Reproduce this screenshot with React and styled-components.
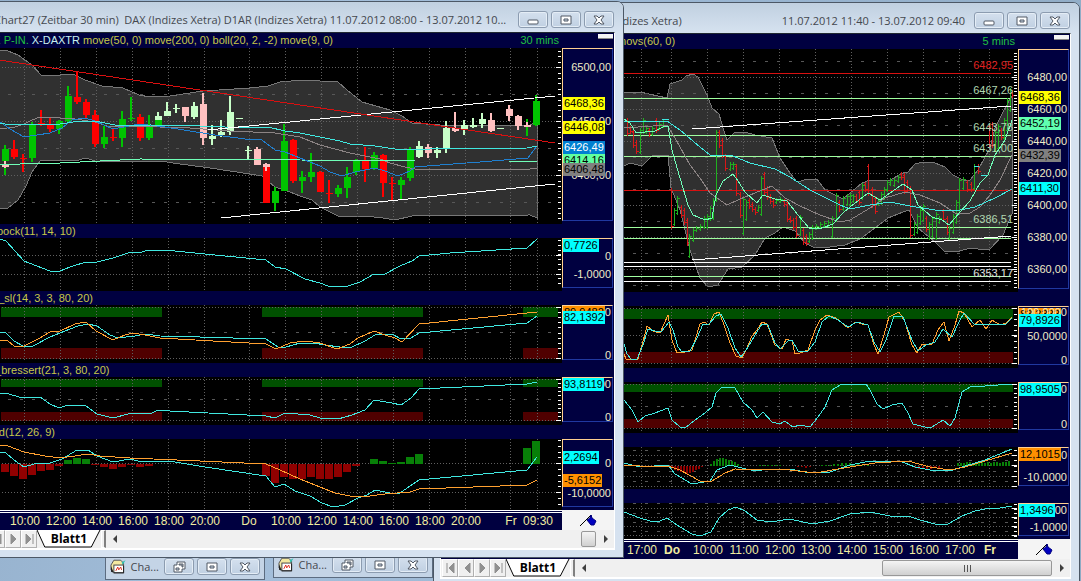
import React from 'react';
import styled, { createGlobalStyle } from 'styled-components'

const GlobalStyle = createGlobalStyle`
*{
    box-sizing: border-box;
    margin: 0;
    padding: 0;
}
body{
    font-family: "Open Sans", "Noto Sans", sans-serif;
    font-size: 11px;
    overflow: hidden;
}
button{
    font: inherit;
    color: inherit;
    border: none;
    background: none;
}
`;

const colors = {
    g: '#00c400',
    r: '#ff0000',
    w: '#c8ffc8',
    p: '#ffc0c0',
    cyan: '#40e8e0',
    orange: '#ffa030',
    mint: '#70ffb8',
    blue: '#2080d0',
    gray: '#8c8484',
    white: '#ffffff',
    red: '#d81010',
    level: '#a0ffa0',
};

/* x, high, low, body top, body bottom, colour */
const candles = [
    [5, 145, 175, 149, 161, 'g'], [5, 161, 168, 165, 167, 'p'], [14, 140, 159, 149, 157, 'r'], [23, 154, 172, 158, 159, 'r'],
    [32, 122, 162, 124, 158, 'g'], [41, 110, 126, 123, 124, 'r'], [50, 118, 132, 125, 129, 'r'],
    [59, 120, 134, 121, 129, 'g'], [68, 86, 123, 96, 121, 'g'], [77, 72, 104, 97, 102, 'r'],
    [86, 99, 118, 102, 115, 'r'], [95, 110, 147, 115, 144, 'r'], [104, 126, 148, 137, 144, 'g'],
    [113, 128, 141, 137, 138, 'r'], [122, 111, 147, 119, 138, 'g'], [131, 97, 121, 118, 119, 'g'],
    [140, 114, 141, 117, 138, 'r'], [149, 115, 140, 125, 138, 'g'], [158, 112, 125, 120, 125, 'g'],
    [158, 112, 120, 116, 120, 'w'], [167, 102, 116, 111, 116, 'w'], [176, 104, 113, 108, 109, 'w'],
    [185, 107, 122, 107, 116, 'p'], [194, 102, 119, 106, 117, 'w'], [203, 93, 145, 104, 138, 'p'],
    [212, 125, 145, 136, 139, 'w'], [221, 120, 137, 132, 135, 'w'], [230, 96, 135, 112, 132, 'w'],
    [239, 118, 119, 118, 119, 'w'], [248, 146, 159, 150, 151, 'w'], [257, 147, 165, 149, 165, 'p'],
    [266, 164, 203, 167, 203, 'r'], [266, 163, 171, 164, 167, 'p'], [275, 187, 211, 191, 203, 'g'],
    [284, 124, 191, 141, 191, 'g'], [293, 139, 183, 140, 181, 'r'], [302, 171, 193, 177, 181, 'g'],
    [311, 153, 182, 172, 177, 'g'], [320, 171, 192, 172, 192, 'r'], [329, 180, 203, 193, 194, 'r'],
    [338, 185, 197, 188, 194, 'g'], [347, 167, 198, 177, 188, 'g'], [356, 159, 175, 160, 172, 'g'],
    [365, 147, 182, 160, 169, 'r'], [374, 152, 170, 155, 168, 'g'], [383, 154, 197, 155, 183, 'r'],
    [392, 177, 200, 183, 184, 'r'], [401, 177, 200, 180, 185, 'g'], [410, 147, 181, 149, 178, 'g'],
    [419, 141, 158, 146, 157, 'w'], [428, 144, 158, 147, 153, 'p'], [437, 147, 158, 150, 153, 'w'],
    [446, 121, 153, 128, 149, 'w'], [455, 112, 132, 128, 131, 'p'], [464, 120, 135, 125, 130, 'w'],
    [473, 118, 128, 125, 127, 'w'], [482, 113, 128, 119, 124, 'w'], [491, 113, 132, 120, 131, 'p'],
    [500, 128, 129, 128, 129, 'w'], [509, 105, 121, 109, 116, 'p'], [518, 115, 130, 116, 126, 'p'],
    [527, 119, 136, 125, 127, 'g'], [527, 122, 127, 125, 127, 'p'], [536, 95, 126, 101, 125, 'g'],
];

/* x, high, low, colour */
const ohlc = [
    [627, 118, 136, 'r'], [630, 126, 134, 'r'], [633, 130, 148, 'r'], [636, 140, 154, 'r'], [640, 128, 154, 'g'],
    [643, 118, 134, 'g'], [646, 126, 134, 'g'], [649, 128, 137, 'r'], [652, 126, 136, 'g'], [656, 118, 133, 'r'],
    [659, 122, 130, 'g'], [663, 119, 128, 'g'], [671, 188, 229, 'r'], [674, 208, 226, 'g'], [677, 196, 215, 'g'],
    [681, 205, 218, 'r'], [684, 208, 225, 'r'], [687, 218, 246, 'r'], [689, 234, 258, 'g'], [693, 228, 242, 'g'],
    [696, 226, 232, 'g'], [700, 224, 231, 'g'], [704, 216, 229, 'g'], [707, 214, 229, 'g'], [710, 206, 221, 'g'],
    [713, 198, 220, 'g'], [716, 130, 202, 'g'], [719, 130, 148, 'r'], [722, 138, 158, 'r'], [725, 154, 171, 'r'],
    [730, 162, 171, 'g'], [733, 162, 170, 'g'], [736, 164, 196, 'r'], [740, 192, 218, 'r'], [743, 197, 235, 'g'],
    [746, 200, 221, 'g'], [749, 198, 209, 'r'], [752, 202, 212, 'r'], [755, 207, 215, 'r'], [758, 205, 212, 'g'],
    [761, 176, 216, 'g'], [764, 172, 195, 'r'], [767, 186, 200, 'r'], [770, 194, 204, 'r'], [773, 199, 208, 'r'],
    [776, 198, 204, 'g'], [780, 197, 203, 'g'], [784, 199, 207, 'r'], [787, 200, 222, 'r'], [790, 216, 223, 'r'],
    [793, 218, 230, 'r'], [796, 216, 238, 'r'], [800, 215, 236, 'g'], [803, 228, 245, 'r'], [806, 234, 246, 'r'],
    [809, 232, 243, 'g'], [812, 225, 240, 'g'], [816, 224, 230, 'g'], [820, 222, 229, 'g'], [824, 221, 228, 'g'],
    [828, 220, 227, 'g'], [832, 216, 238, 'g'], [836, 193, 222, 'g'], [839, 200, 212, 'r'], [843, 196, 211, 'g'],
    [847, 194, 206, 'g'], [850, 193, 206, 'g'], [853, 194, 203, 'g'], [856, 194, 203, 'r'], [859, 190, 205, 'r'],
    [862, 183, 200, 'g'], [865, 182, 192, 'r'], [868, 164, 196, 'r'], [872, 187, 208, 'r'], [875, 196, 214, 'r'],
    [878, 198, 206, 'g'], [881, 192, 205, 'g'], [884, 187, 200, 'g'], [887, 180, 192, 'g'], [890, 178, 186, 'g'],
    [894, 178, 187, 'g'], [898, 175, 183, 'g'], [901, 172, 180, 'r'], [904, 173, 194, 'r'], [907, 180, 193, 'r'],
    [910, 186, 238, 'r'], [914, 222, 236, 'g'], [917, 214, 234, 'g'], [920, 208, 225, 'g'], [923, 204, 222, 'g'],
    [926, 216, 232, 'r'], [929, 222, 240, 'g'], [932, 216, 238, 'g'], [936, 212, 240, 'g'], [939, 216, 224, 'g'],
    [943, 209, 222, 'r'], [947, 216, 235, 'r'], [949, 226, 241, 'g'], [953, 214, 234, 'g'], [956, 200, 224, 'g'],
    [959, 178, 212, 'g'], [963, 177, 190, 'g'], [967, 180, 192, 'r'], [971, 182, 192, 'r'], [974, 164, 190, 'g'],
    [978, 164, 174, 'r'], [989, 124, 148, 'r'], [992, 122, 148, 'r'], [995, 130, 152, 'g'], [998, 124, 150, 'g'],
    [1001, 128, 140, 'r'], [1004, 118, 140, 'g'], [1007, 98, 132, 'g'], [1010, 88, 112, 'g'], [1012, 90, 98, 'r'],
];

/* x and height of each macd bar, negative hangs below zero */
const macdBars30 = [
    [-4, -5], [5, -8], [14, -12], [23, -15], [32, -11], [41, -7], [50, -6], [59, -2], [68, 4], [77, 6], [86, 5],
    [95, -1], [104, -3], [113, -5], [122, -3], [131, -1], [140, -3], [149, -2],
    [266, -12], [275, -19], [284, -13], [293, -15], [302, -15], [311, -13], [320, -15], [329, -15], [338, -13],
    [347, -8], [356, -2], [374, 5], [383, 3], [392, 1], [401, 2], [410, 7], [419, 10], [527, 16], [536, 23],
];
const macdBars5 = [
    [672, -2], [675, -4], [678, -5], [681, -6], [684, -7], [687, -8], [690, -7], [693, -6], [696, -4], [699, -3], [702, -1],
    [711, 2], [714, 5], [717, 7], [720, 8], [723, 8], [726, 7], [729, 6], [732, 5], [735, 4], [738, 2],
    [760, 1], [764, 1], [768, 1], [772, 1], [776, 1], [780, 1], [798, -1], [802, -1], [806, -2], [810, -1],
    [822, 1], [826, 1], [830, 1], [834, 2], [838, 2], [842, 3], [846, 3], [850, 3], [854, 2], [858, 2], [862, 1], [868, 1],
    [915, -2], [919, -3], [923, -3], [927, -3], [931, -3], [935, -2], [939, -2],
    [958, 3], [961, 3], [964, 3], [967, 4], [970, 4], [973, 3], [976, 4], [979, 4], [982, 4], [985, 3], [988, 4],
    [991, 3], [994, 4], [997, 4], [1000, 3], [1003, 4], [1006, 4], [1009, 5],
];

const tag = (y, text, bg, color = '#000') => ({ y, text, bg, color });
const mark = (y, text) => ({ y, text });

const chart30 = {
    x: -28,
    width: 590,
    end: 555,
    tickX: [24, 60, 96, 132, 168, 204, 249, 285, 321, 357, 393, 429, 465, 510, 537],
    times: [[25, '10:00'], [61, '12:00'], [97, '14:00'], [133, '16:00'], [169, '18:00'], [205, '20:00'], [249, 'Do'],
        [286, '10:00'], [322, '12:00'], [358, '14:00'], [394, '16:00'], [430, '18:00'], [466, '20:00'], [511, 'Fr'], [538, '09:30']],
    panes: [
        {
            top: 48, height: 176, candles: true,
            legend: [['DAX P-IN.', '#20c040'], ['X-DAXTR', '#c8f0f0'], ['move(50, 0)'], ['move(200, 0)'], ['boll(20, 2, -2)'], ['move(9, 0)']],
            period: '30 mins',
            dotted: [67, 121, 175], dashed: [94, 148, 202], ticks: [51, 5.4],
            band: '-28,50 0,50 8,51 18,55 32,65 41,75 60,75 73,74 85,80 102,86 123,88 139,95 150,97 170,96 203,91 250,88 268,86 280,82 302,80 338,82 347,90 362,102 390,110 402,116 412,123 440,125 500,126 530,125 537,121 537,218 530,215 412,216 395,220 383,218 365,216 338,216 320,207 312,200 300,196 285,190 275,187 262,176 250,174 210,168 180,164 160,161 95,161 86,158 75,161 60,160 41,160 32,172 26,186 18,200 8,208 -28,208',
            lines: [
                ['gray', '-28,131 0,129 15,127 24,124 32,120 40,117 60,118 75,119 95,122 110,127 130,126 190,128 230,131 275,133 300,137 320,145 350,153 380,159 390,163 405,167 415,169 530,169 537,168'],
                ['mint', '-28,166 0,165 40,163 60,163 140,159 300,160 415,161 537,161'],
                ['blue', '-28,116 0,122 10,129 24,137 50,133 62,128 72,120 85,118 95,121 113,129 140,124 165,127 190,131 215,135 245,139 262,140 275,150 285,152 300,158 320,166 330,172 342,176 355,172 375,168 385,171 398,176 410,171 415,167 440,165 480,162 528,158 537,146'],
                ['cyan', '-28,122 0,123 10,125 40,124 60,124 80,121 100,122 120,126 150,125 200,126 250,128 268,127 285,131 300,133 320,137 340,141 350,144 375,146 395,149 430,149 527,148 537,146'],
                ['white', '208,130 555,96'],
                ['white', '221,218 555,184'],
                ['red', '-28,56 555,143'],
            ],
            scale: [mark(67, '6500,00'), mark(121, '6450,00'), mark(175, '6400,00'),
                tag(103, '6468,36', '#ffff00'), tag(127, '6446,08', '#ffff00'), tag(160, '6414,16', '#60ffa0'),
                tag(147, '6426,49', '#0080d0', '#fff'), tag(169, '6406,48', '#808080')],
        },
        {
            top: 238, height: 53, legend: [['Kl-spock(11, 14, 10)']],
            dotted: [255, 274], dashed: [], ticks: [240, 4.8],
            lines: [['cyan', '-28,238 0,239 6,241 24,261 50,271 60,271 70,267 86,262 97,262 113,258 128,253 142,252 148,250 165,250 205,254 266,260 275,267 286,269 305,279 320,283 328,286 348,286 360,282 374,274 383,275 400,266 412,261 419,256 450,253 527,248 537,239']],
            scale: [tag(245, '0,7726', '#00ffff'), mark(256, '0'), mark(274, '-1,0000')],
        },
        {
            top: 305, height: 58, legend: [['stoc_sl(14, 3, 3, 80, 20)']],
            dotted: [307, 358], dashed: [332], ticks: [307, 5.1],
            zones: [[1, 161], [262, 161], [523, 35]], zoneY: [307, 10, 348, 11],
            lines: [
                ['cyan', '-28,334 0,332 5,332 14,341 23,346 33,346 50,337 65,331 78,326 88,324 97,326 110,335 118,338 135,336 145,334 160,336 200,337 266,339 278,347 286,347 300,343 314,343 325,345 340,347 352,347 365,341 375,335 392,334 401,339 411,338 419,333 527,323 537,316'],
                ['orange', '-28,338 0,340 8,341 14,346 24,346 38,339 50,332 60,331 75,324 86,322 96,331 113,340 125,335 133,333 145,335 160,338 266,344 276,349 290,343 305,341 320,343 337,349 350,344 358,338 374,331 385,335 395,338 402,342 419,324 537,312'],
            ],
            scale: [mark(312, '100,0000'), tag(312, '89,9482', '#ff9000'), tag(317, '82,1392', '#00ffff'), mark(355, '0')],
        },
        {
            top: 377, height: 48, legend: [['dss_bressert(21, 3, 80, 20)']],
            dotted: [379, 420], dashed: [399], ticks: [379, 4.1],
            zones: [[1, 161], [262, 161], [523, 35]], zoneY: [379, 8, 412, 9],
            lines: [['cyan', '-28,391 0,393 6,393 22,398 40,397 50,404 59,408 68,405 85,405 97,414 113,418 132,413 150,414 158,410 170,411 266,416 275,418 285,413 310,415 320,418 338,419 352,415 365,410 374,400 392,403 401,405 411,398 419,389 527,384 537,382']],
            scale: [mark(384, '100,0000'), tag(384, '93,8119', '#00ffff'), mark(417, '0')],
        },
        {
            top: 439, height: 71, legend: [['macd(12, 26, 9)']],
            dotted: [463, 492], dashed: [], ticks: [440, 5.8],
            bars: macdBars30, barWidth: 8, zero: 464,
            lines: [
                ['cyan', '-28,450 0,452 6,453 14,460 24,467 34,464 50,463 62,459 77,450 88,450 97,456 113,462 130,459 142,462 160,461 175,462 205,467 266,476 275,487 284,484 295,491 310,496 322,503 333,507 345,505 358,498 367,495 375,490 390,493 400,493 410,486 419,480 440,478 527,470 537,457'],
                ['orange', '-28,444 0,445 8,446 24,452 45,456 60,458 75,456 88,454 100,456 130,458 200,461 266,464 280,470 300,479 320,487 335,493 350,496 370,496 385,494 410,492 419,489 527,485 537,480'],
            ],
            scale: [tag(457, '2,2694', '#00ffff'), mark(463, '0'), tag(480, '-5,6152', '#ff9000'), mark(493, '-10,0000')],
        },
    ],
};

const chart5 = {
    x: 441,
    width: 577,
    end: 1011,
    tickX: [641, 671, 707, 743, 779, 815, 851, 887, 923, 959, 989],
    times: [[642, '17:00'], [672, 'Do', true], [708, '10:00'], [744, '11:00'], [780, '12:00'], [816, '13:00'], [852, '14:00'],
        [888, '15:00'], [924, '16:00'], [960, '17:00'], [990, 'Fr', true]],
    panes: [
        {
            top: 49, height: 243, ohlc: true,
            legend: [['movs(60, 0)']],
            period: '5 mins',
            dotted: [77, 109, 141, 173, 205, 237, 269], dashed: [61, 93, 125, 157, 189, 221, 253, 285], ticks: [53, 3.2],
            band: '441,93 624,93 640,92 667,98 670,84 682,80 686,76 693,74 698,77 707,95 712,108 719,114 724,131 727,140 735,132 745,132 755,135 772,138 780,158 790,173 797,182 808,179 817,179 825,190 843,199 850,193 862,183 870,180 890,180 903,173 908,172 915,164 923,162 935,163 945,167 953,175 963,180 970,180 978,170 990,148 995,128 1003,112 1012,96 1012,214 1003,235 990,249 985,250 970,248 960,251 945,252 935,242 918,228 909,210 903,212 888,218 875,228 860,239 845,245 830,247 815,248 805,243 795,231 783,227 775,233 765,238 755,255 742,267 728,269 718,285 708,287 700,278 690,250 680,210 671,188 668,155 652,156 642,166 630,163 624,166 441,166',
            levels: [[73, 'red'], [98, 'level'], [135, 'level'], [156, 'level'], [190, 'red'], [227, 'level'], [238, 'level'],
                [262, 'white'], [266, 'white'], [276, 'level'], [281, 'white']],
            lines: [
                ['gray', '624,128 667,125 675,138 690,165 700,178 710,193 727,205 740,199 755,193 772,186 785,198 800,206 820,215 840,222 850,220 870,208 885,198 905,192 920,195 940,203 955,213 970,213 980,207 990,195 1000,180 1012,155'],
                ['cyan', '624,121 667,121 680,130 700,147 710,155 733,156 750,163 775,169 790,177 810,190 840,205 850,209 870,205 890,202 910,206 935,210 955,211 975,207 995,198 1012,189'],
                ['mint', '624,119 630,123 636,133 655,131 665,126 668,126 672,150 680,178 688,205 693,215 705,220 712,218 716,195 723,181 733,174 738,181 745,192 757,203 763,195 775,199 787,201 798,215 809,228 822,228 833,224 843,213 850,207 868,193 880,200 890,193 903,184 912,190 918,205 932,217 942,220 949,225 960,212 970,201 980,183 988,175 995,155 1005,140 1012,120'],
                ['white', '692,129 1011,106'],
                ['white', '692,260 1011,236'],
                ['cyan', '662,119 669,119'],
                ['cyan', '974,166 979,166'],
                ['cyan', '981,175 987,175'],
            ],
            notes: [[65, '6482,95', '#e02020'], [90, '6467,26', '#b0d8b0'], [127, '6443,78', '#b0d8b0'], [148, '6431,00', '#b0d8b0'],
                [219, '6386,51', '#b0d8b0'], [273, '6353,17', '#e0e0e0']],
            scale: [mark(77, '6480,00'), mark(109, '6460,00'), mark(141, '6440,00'), mark(173, '6420,00'), mark(205, '6400,00'),
                mark(237, '6380,00'), mark(269, '6360,00'), tag(97, '6468,36', '#ffff00'), tag(123, '6452,19', '#60ffb0'),
                tag(155, '6432,39', '#808080'), tag(188, '6411,30', '#00ffff')],
        },
        {
            top: 306, height: 62, legend: [],
            dotted: [308, 335, 363], dashed: [], ticks: [308, 5.5],
            zones: [[441, 572]], zoneY: [309, 10, 352, 11],
            lines: [
                ['orange', '624,354 626,359 638,359 645,334 647,326 653,331 660,333 668,315 672,340 677,353 685,352 692,350 700,324 704,322 709,325 714,314 719,312 724,325 730,343 736,356 742,358 746,350 752,336 757,330 762,322 767,324 775,345 782,349 786,339 792,341 795,354 800,353 808,350 815,330 820,320 827,315 836,318 848,328 856,322 862,324 868,325 874,345 878,354 884,335 889,317 899,312 905,322 912,345 917,353 922,344 932,344 938,330 944,322 949,341 955,325 959,311 964,313 972,327 980,320 986,329 992,320 1000,325 1006,323 1012,317'],
                ['cyan', '624,344 627,354 631,359 637,359 643,345 648,329 655,331 661,332 669,322 673,330 678,347 682,352 690,351 697,338 703,324 709,324 716,316 721,314 728,328 735,348 741,357 748,347 755,335 762,324 768,325 775,343 780,349 788,341 792,340 798,351 808,351 815,342 822,322 829,316 838,320 848,327 857,322 868,325 874,342 880,352 886,340 894,316 903,317 912,340 918,351 926,345 935,342 943,329 952,337 959,322 964,313 975,325 986,324 996,324 1006,324 1012,318'],
            ],
            scale: [tag(314, '83,3333', '#ff9000'), mark(312, '100,0000'), tag(320, '79,8926', '#00ffff'), mark(336, '50,0000'), mark(360, '0')],
        },
        {
            top: 382, height: 51, legend: [],
            dotted: [384, 428], dashed: [406], ticks: [384, 4.4],
            zones: [[441, 572]], zoneY: [384, 8, 419, 9],
            lines: [['cyan', '624,400 632,410 638,422 645,416 655,413 668,408 672,420 680,427 685,428 695,420 705,413 712,407 716,393 722,387 735,388 743,402 752,410 757,418 763,412 772,422 780,424 785,421 793,427 800,425 810,427 818,417 825,407 832,390 840,385 866,384 870,390 877,404 883,409 892,405 902,403 908,413 913,424 925,427 932,427 943,420 950,426 955,418 962,392 970,387 985,386 1012,384']],
            scale: [mark(389, '100,0000'), tag(389, '98,9505', '#00ffff'), mark(424, '0')],
        },
        {
            top: 447, height: 42, legend: [],
            dotted: [455, 465, 476, 486], dashed: [450, 460, 471, 481], ticks: [450, 5.2],
            bars: macdBars5, barWidth: 2, zero: 466,
            lines: [
                ['cyan', '624,463 640,467 668,465 675,474 692,484 710,481 717,470 730,465 742,468 755,471 770,469 790,469 810,473 830,472 850,465 870,461 900,461 915,467 930,470 950,471 965,466 985,460 1012,449'],
                ['orange', '624,465 640,466 668,466 680,470 700,481 712,481 725,473 735,469 790,470 815,473 850,467 875,463 908,461 930,467 950,470 965,467 985,461 1012,453'],
            ],
            scale: [mark(455, '10,0000'), tag(454, '12,1015', '#ff9000'), mark(477, '-10,0000')],
        },
        {
            top: 503, height: 36, legend: [],
            dotted: [508, 517, 526, 535], dashed: [503, 513, 522, 531], ticks: [504, 4.5],
            lines: [['cyan', '624,512 640,518 650,521 660,521 667,518 680,527 692,534 700,536 711,532 719,518 728,510 736,507 745,511 757,520 770,522 790,519 812,524 830,521 850,514 870,512 890,516 908,516 920,520 935,524 948,524 962,516 975,511 990,508 1000,508 1012,506']],
            scale: [mark(510, '1,0000'), tag(510, '1,3496', '#00ffff'), mark(527, '-1,0000')],
        },
    ],
};

function AppIcon() {
    return (
        <svg width="16" height="16" viewBox="0 0 16 16" aria-hidden="true">
            <path d="M1 6L4 1h7l3 3-2 9H3L1 11z" fill="#f4e9a0" stroke="#555" />
            <path d="M12 3l4-2-3 5z" fill="#30c0b0" />
            <path d="M1 7l3 7-3-1z" fill="#222" />
            <rect x="4" y="6" width="10" height="8" fill="#fff" stroke="#444" />
            <path d="M6 12l2-4 1 3 2-3 1 3" fill="none" stroke="#e03020" />
            <path d="M14 7v7H4" fill="none" stroke="#222" />
        </svg>
    );
}

const glyphs = {
    minimize: <rect x="4" y="7" width="10" height="4" rx="1" />,
    maximize: <path fillRule="evenodd" d="M4 3h10v8H4zM7 6v2h4V6z" />,
    restore: <path fillRule="evenodd" d="M7 2h8v7h-3v3H4V5h3zM9 4v1h3v2h1V4zM6 8v2h3V8z" />,
    close: <path d="M4 3h3l2 2 2-2h3l-3 4 3 4h-3l-2-2-2 2H4l3-4z" />,
};

function Controls({ first = 'minimize' }) {
    return (
        <ControlsStyled>
            {[first, 'maximize', 'close'].map((name) => (
                <button key={name} aria-label={name}>
                    <svg width="18" height="14" viewBox="0 0 18 14">{glyphs[name]}</svg>
                </button>
            ))}
        </ControlsStyled>
    );
}

function Plot({ chart, pane }) {
    const { top, height } = pane;
    const right = chart.x + chart.width;
    const ticks = [];
    for (let i = 0; pane.ticks[0] + i * pane.ticks[1] < top + height - 3; i++) {
        ticks.push(Math.round(pane.ticks[0] + i * pane.ticks[1]));
    }

    return (
        <PlotStyled $height={height}>
            <svg viewBox={`${chart.x} ${top} ${chart.width} ${height}`} preserveAspectRatio="none" shapeRendering="crispEdges">
                {pane.band && <polygon points={pane.band} fill="#303030" stroke="#777" />}
                {pane.zones && pane.zones.map(([x, w]) => (
                    <g key={x}>
                        <rect x={x} y={pane.zoneY[0]} width={w} height={pane.zoneY[1]} fill="#005000" />
                        <rect x={x} y={pane.zoneY[2]} width={w} height={pane.zoneY[3]} fill="#500000" />
                    </g>
                ))}
                <g stroke="#606060" strokeDasharray="1 2">
                    {chart.tickX.map((x) => <line key={x} x1={x + .5} x2={x + .5} y1={top} y2={top + height - 1} />)}
                    {pane.dotted.map((y) => <line key={y} x1={chart.x} x2={chart.end + 4} y1={y + .5} y2={y + .5} />)}
                </g>
                <g stroke="#585858" strokeDasharray="3 9">
                    {pane.dashed.map((y) => <line key={y} x1={chart.x} x2={chart.end} y1={y + .5} y2={y + .5} />)}
                </g>
                {pane.bars && pane.bars.map(([x, h]) => (
                    <rect key={x} x={x - pane.barWidth / 2} y={h > 0 ? pane.zero - h : pane.zero} width={pane.barWidth}
                        height={Math.abs(h)} fill={h > 0 ? '#088008' : '#900000'} />
                ))}
                {pane.levels && pane.levels.map(([y, c]) => (
                    <line key={y} x1={chart.x} x2={chart.end} y1={y + .5} y2={y + .5} stroke={colors[c]} />
                ))}
                {pane.ohlc && ohlc.map(([x, hi, lo, c]) => (
                    <path key={x} stroke={c === 'g' ? '#20b020' : '#d81818'} fill="none"
                        d={`M${x + .5} ${hi}V${lo}M${x - 1} ${c === 'g' ? lo - 2 : hi + 2}.5h2M${x} ${c === 'g' ? hi + 2 : lo - 3}.5h3`} />
                ))}
                {pane.candles && candles.map(([x, hi, lo, a, b, c], i) => (
                    <g key={i} fill={colors[c]}>
                        <rect x={x - 1} y={hi} width="2" height={lo - hi} />
                        <rect x={x - 3} y={a} width="7" height={b - a} />
                    </g>
                ))}
                {pane.lines.map(([c, points], i) => (
                    <polyline key={i} points={points} fill="none" stroke={colors[c]} />
                ))}
                {ticks.map((y) => <rect key={y} x={right - 4} y={y} width="3" height="1" fill="#fff" />)}
                {pane.dotted.map((y) => <rect key={y} x={right - 6} y={y} width="5" height="1" fill="#fff" />)}
            </svg>
            {pane.notes && pane.notes.map(([y, text, color]) => (
                <Note key={text} $y={y - top} $color={color}>{text}</Note>
            ))}
        </PlotStyled>
    );
}

function Sheet({ chart, indent, thumb }) {
    return (
        <SheetStyled>
            {chart.panes.map((pane, i) => (
                <React.Fragment key={pane.top}>
                    <Legend $main={i === 0} $indent={indent}>
                        {pane.legend.map(([text, color]) => <Series key={text} $color={color}>{text}</Series>)}
                        {pane.period && <Period>{pane.period}</Period>}
                        {pane.period && <Stub />}
                    </Legend>
                    <Row>
                        <Plot chart={chart} pane={pane} />
                        <Scale>
                            {pane.scale.map((s) => (
                                <ScaleLabel key={s.text} $y={s.y - pane.top} $bg={s.bg} $color={s.color}>{s.text}</ScaleLabel>
                            ))}
                        </Scale>
                    </Row>
                </React.Fragment>
            ))}
            <Row>
                <TimeAxis>
                    {chart.times.map(([x, text, bold]) => (
                        <TimeLabel key={x} $bold={bold} style={{ left: `${((x - chart.x) / chart.width) * 100}%` }}>{text}</TimeLabel>
                    ))}
                </TimeAxis>
                <Corner aria-label="Scale">
                    <svg width="18" height="14" viewBox="0 0 18 14">
                        <path d="M1 13L12 2v5" fill="none" stroke="#000" />
                        <path d="M8 7l3-2 1-3 1 3 4 3-2 4h-3z" fill="#0000c0" stroke="#000080" />
                    </svg>
                </Corner>
            </Row>
            <TabStrip>
                {['M4 3v10M11 3v10L6 8z', 'M11 3v10L6 8z', 'M5 3v10l5-5z', 'M4 3v10l5-5zM11 3v10'].map((d, i) => (
                    <StepButton key={d} aria-label={['First', 'Previous', 'Next', 'Last'][i]}>
                        <svg width="15" height="16" viewBox="0 0 15 16"><path d={d} fill="#909090" stroke="#909090" /></svg>
                    </StepButton>
                ))}
                <Tab>
                    <svg viewBox="0 0 66 18" preserveAspectRatio="none" aria-hidden="true">
                        <path d="M0 0L8 17H56L65 0" fill="#fff" stroke="#000" />
                    </svg>
                    <span>Blatt1</span>
                </Tab>
                <Splitter />
                <ScrollButton aria-label="Left"><svg width="4" height="8"><path d="M4 0v8L0 4z" /></svg></ScrollButton>
                <Track>
                    <Thumb $width={thumb} aria-label="Scroll">
                        {thumb > 50 && <svg width="9" height="7"><path d="M1.5 0v7M4.5 0v7M7.5 0v7" stroke="#555" /></svg>}
                    </Thumb>
                </Track>
                <ScrollButton aria-label="Right"><svg width="4" height="8"><path d="M0 0v8l4-4z" /></svg></ScrollButton>
            </TabStrip>
        </SheetStyled>
    );
}

function App() {
    return (
        <Desktop>
            <GlobalStyle />
            <MiniWindow $left={105} $top={553}>
                <AppIcon />
                <span>Cha...</span>
                <Controls first="restore" />
            </MiniWindow>
            <MiniWindow $left={273} $top={551}>
                <AppIcon />
                <span>Cha...</span>
                <Controls first="restore" />
            </MiniWindow>
            <Window $left={433} $right={1} $top={2}>
                <TitleBar $end>
                    <h2>DAX (Indizes Xetra)</h2>
                    <h2>11.07.2012 11:40 - 13.07.2012 09:40</h2>
                    <Controls />
                </TitleBar>
                <Sheet chart={chart5} indent={176} thumb={170} />
            </Window>
            <Window $left={-36} $right={457} $top={1}>
                <TitleBar>
                    <AppIcon />
                    <h2>Chart27 (Zeitbar 30 min)&nbsp; DAX (Indizes Xetra) D1AR (Indizes Xetra) 11.07.2012 08:00 - 13.07.2012 10...</h2>
                    <Controls />
                </TitleBar>
                <Sheet chart={chart30} indent={6} thumb={15} />
            </Window>
        </Desktop>
    );
}

const Desktop = styled.main`
position: relative;
height: 100vh;
overflow: hidden;
background: linear-gradient(100deg, #94b0cc, #a4bfdb 30%, #9ab6d2 60%, #8fabc4);
`;

const Window = styled.section`
position: absolute;
top: ${(p) => p.$top}px;
left: ${(p) => p.$left}px;
right: ${(p) => p.$right}px;
padding: 0 8px 7px 6px;
background: #d6e2f0;
border: 1px solid #4c5866;
border-radius: 7px 7px 0 0;
box-shadow: inset 0 1px 0 #e8f0f8;
`;

const TitleBar = styled.header`
display: flex;
align-items: center;
justify-content: ${(p) => p.$end ? 'flex-end' : 'flex-start'};
gap: ${(p) => p.$end ? '0' : '6px'};
height: 30px;
margin: 0 -8px 0 -6px;
padding: 5px 9px 0 7px;
border-radius: 6px 6px 0 0;
background: linear-gradient(#c0d0e0, #d6e2f0);
color: #44484e;
h2{
    flex: none;
    font-size: 11px;
    font-weight: 400;
    white-space: nowrap;
}
h2 + h2{
    margin: 0 9px 0 100px;
}
svg{
    flex: none;
}
div{
    margin-left: ${(p) => p.$end ? '0' : 'auto'};
}
`;

const ControlsStyled = styled.div`
display: flex;
flex: none;
gap: 3px;
button{
    display: grid;
    place-items: center;
    width: 30px;
    height: 17px;
    border: 1px solid #8c9cb0;
    border-radius: 3px;
    background: linear-gradient(#d4e0ee, #c0d0e2);
    box-shadow: inset 0 0 0 1px #e4edf6;
}
svg{
    fill: #fff;
    stroke: #505864;
}
`;

const MiniWindow = styled.section`
position: absolute;
top: ${(p) => p.$top}px;
left: ${(p) => p.$left}px;
display: flex;
align-items: center;
gap: 5px;
width: 160px;
height: 27px;
padding: 0 4px;
border: 1px solid #5c6c80;
background: #c4d4e6;
color: #44484e;
div{
    margin-left: auto;
}
`;

const SheetStyled = styled.div`
border: 1px solid #fff;
border-top-color: #202830;
background: #000040;
font-family: "Liberation Sans", Arial, sans-serif;
font-size: 11px;
`;

const Legend = styled.div`
position: relative;
display: flex;
gap: 3px;
height: ${(p) => p.$main ? '15px' : '14px'};
padding: 0 67px 0 ${(p) => p.$indent}px;
line-height: 15px;
white-space: nowrap;
`;

const Series = styled.span`
color: ${(p) => p.$color || '#c8c848'};
`;

const Period = styled.span`
margin-left: auto;
margin-right: -12px;
color: #20c040;
`;

const Stub = styled.i`
position: absolute;
top: 1px;
right: 1px;
width: 15px;
height: 5px;
background: #f4f4f4;
border-bottom: 1px solid #888;
`;

const Row = styled.div`
display: grid;
grid-template-columns: minmax(0, 1fr) 52px;
`;

const PlotStyled = styled.div`
position: relative;
height: ${(p) => p.$height}px;
background: #000;
svg{
    display: block;
    width: 100%;
    height: 100%;
}
`;

const Note = styled.span`
position: absolute;
top: ${(p) => p.$y - 7}px;
right: 5px;
line-height: 14px;
color: ${(p) => p.$color};
`;

const Scale = styled.div`
position: relative;
margin: 0 1px 3px 0;
border: 1px solid #2038a0;
border-top-color: #ffd090;
border-left-color: #ffd090;
`;

const ScaleLabel = styled.span`
position: absolute;
top: ${(p) => p.$y - 7}px;
${(p) => p.$bg ? 'left: 0;' : 'right: 0;'}
padding: 0 1px;
line-height: 13px;
background: ${(p) => p.$bg || 'none'};
color: ${(p) => p.$color || '#f0ecc8'};
`;

const TimeAxis = styled.div`
position: relative;
height: 20px;
border-top: 3px double #fff;
background: #000040;
`;

const TimeLabel = styled.span`
position: absolute;
top: 0;
line-height: 16px;
transform: translateX(-50%);
color: #f0eca0;
font-size: 12px;
font-weight: ${(p) => p.$bold ? 700 : 400};
`;

const Corner = styled.button`
display: grid;
place-items: center;
background: #f4f4f4;
`;

const TabStrip = styled.div`
display: flex;
height: 19px;
padding-left: 1px;
background: #f0f0f0;
border-bottom: 1px solid #fff;
`;

const StepButton = styled.button`
width: 16px;
border: 1px solid #fff;
border-right-color: #b0b0b0;
border-bottom-color: #b0b0b0;
svg{
    display: block;
}
`;

const Tab = styled.button`
display: grid;
place-items: center;
width: 64px;
font-family: "Open Sans", sans-serif;
font-size: 12px;
font-weight: 700;
line-height: 16px;
svg, span{
    grid-area: 1 / 1;
}
svg{
    width: 100%;
    height: 18px;
}
`;

const Splitter = styled.i`
width: 5px;
border: 1px solid #fff;
border-right: 2px solid #808080;
`;

const ScrollButton = styled.button`
display: grid;
place-items: center;
width: 17px;
fill: #404040;
`;

const Track = styled.div`
display: flex;
flex: 1;
justify-content: flex-end;
padding: 1px;
`;

const Thumb = styled.button`
display: grid;
place-items: center;
width: ${(p) => p.$width}px;
border: 1px solid #989898;
border-radius: 2px;
background: linear-gradient(#f4f4f4, #d0d0d0);
`;

export default App;
